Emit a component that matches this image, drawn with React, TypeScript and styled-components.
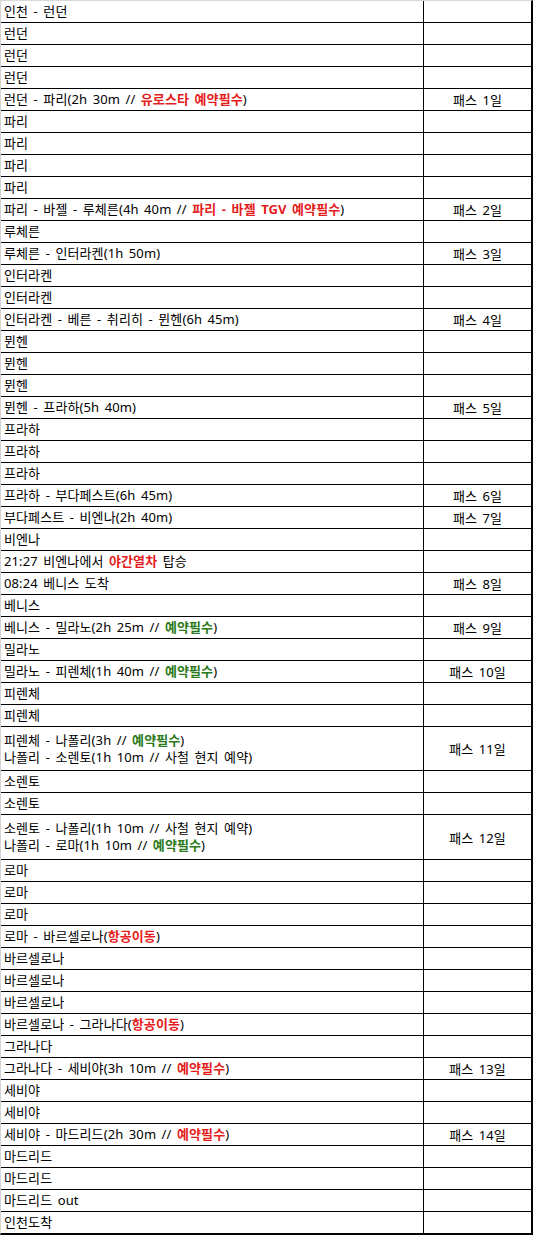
import React from 'react';
import styled, { createGlobalStyle } from 'styled-components';

const GlobalStyle = createGlobalStyle`
  html, body {
    margin: 0;
    padding: 0;
    background: #fff;
  }
  * {
    box-sizing: border-box;
  }
`;

type Tone = 'plain' | 'red' | 'green';

interface Item {
    lines: string[];
    pass?: string;
    h?: number;
}

// [r:...] = red bold, [g:...] = green bold
const items: Item[] = [
    { lines: ['인천 - 런던'] },
    { lines: ['런던'] },
    { lines: ['런던'] },
    { lines: ['런던'] },
    { lines: ['런던 - 파리(2h 30m // [r:유로스타 예약필수])'], pass: '패스 1일' },
    { lines: ['파리'] },
    { lines: ['파리'] },
    { lines: ['파리'] },
    { lines: ['파리'] },
    { lines: ['파리 - 바젤 - 루체른(4h 40m // [r:파리 - 바젤 TGV 예약필수])'], pass: '패스 2일' },
    { lines: ['루체른'] },
    { lines: ['루체른 - 인터라켄(1h 50m)'], pass: '패스 3일' },
    { lines: ['인터라켄'] },
    { lines: ['인터라켄'] },
    { lines: ['인터라켄 - 베른 - 취리히 - 뮌헨(6h 45m)'], pass: '패스 4일' },
    { lines: ['뮌헨'] },
    { lines: ['뮌헨'] },
    { lines: ['뮌헨'] },
    { lines: ['뮌헨 - 프라하(5h 40m)'], pass: '패스 5일' },
    { lines: ['프라하'] },
    { lines: ['프라하'] },
    { lines: ['프라하'] },
    { lines: ['프라하 - 부다페스트(6h 45m)'], pass: '패스 6일' },
    { lines: ['부다페스트 - 비엔나(2h 40m)'], pass: '패스 7일' },
    { lines: ['비엔나'] },
    { lines: ['21:27 비엔나에서 [r:야간열차] 탑승'] },
    { lines: ['08:24 베니스 도착'], pass: '패스 8일' },
    { lines: ['베니스'] },
    { lines: ['베니스 - 밀라노(2h 25m // [g:예약필수])'], pass: '패스 9일' },
    { lines: ['밀라노'] },
    { lines: ['밀라노 - 피렌체(1h 40m // [g:예약필수])'], pass: '패스 10일' },
    { lines: ['피렌체'] },
    { lines: ['피렌체'] },
    {
        lines: ['피렌체 - 나폴리(3h // [g:예약필수])', '나폴리 - 소렌토(1h 10m // 사철 현지 예약)'],
        pass: '패스 11일',
        h: 43,
    },
    { lines: ['소렌토'] },
    { lines: ['소렌토'] },
    {
        lines: ['소렌토 - 나폴리(1h 10m // 사철 현지 예약)', '나폴리 - 로마(1h 10m // [g:예약필수])'],
        pass: '패스 12일',
        h: 44,
    },
    { lines: ['로마'] },
    { lines: ['로마'] },
    { lines: ['로마'] },
    { lines: ['로마 - 바르셀로나([r:항공이동])'] },
    { lines: ['바르셀로나'] },
    { lines: ['바르셀로나'] },
    { lines: ['바르셀로나'] },
    { lines: ['바르셀로나 - 그라나다([r:항공이동])'] },
    { lines: ['그라나다'] },
    { lines: ['그라나다 - 세비야(3h 10m // [r:예약필수])'], pass: '패스 13일' },
    { lines: ['세비야'] },
    { lines: ['세비야'] },
    { lines: ['세비야 - 마드리드(2h 30m // [r:예약필수])'], pass: '패스 14일' },
    { lines: ['마드리드'] },
    { lines: ['마드리드'] },
    { lines: ['마드리드 out'] },
    { lines: ['인천도착'] },
];

const parse = (line: string): { text: string; tone: Tone }[] => {
    const out: { text: string; tone: Tone }[] = [];
    const re = /\[(r|g):([^\]]+)\]/g;
    let last = 0;
    let m: RegExpExecArray | null;
    while ((m = re.exec(line)) !== null) {
        if (m.index > last) out.push({ text: line.slice(last, m.index), tone: 'plain' });
        out.push({ text: m[2], tone: m[1] === 'r' ? 'red' : 'green' });
        last = m.index + m[0].length;
    }
    if (last < line.length) out.push({ text: line.slice(last), tone: 'plain' });
    return out;
};

export default function App() {
    return (
        <>
            <GlobalStyle />
            <Sheet>
                {items.map((item, i) => (
                    <Row key={i} $h={item.h ?? 21}>
                        <RouteCell>
                            {item.lines.map((line, j) => (
                                <Line key={j}>
                                    {parse(line).map((seg, k) =>
                                        seg.tone === 'plain' ? (
                                            <React.Fragment key={k}>{seg.text}</React.Fragment>
                                        ) : (
                                            <Mark key={k} $tone={seg.tone}>{seg.text}</Mark>
                                        )
                                    )}
                                </Line>
                            ))}
                        </RouteCell>
                        <PassCell>{item.pass}</PassCell>
                    </Row>
                ))}
            </Sheet>
        </>
    );
}

const Sheet = styled.div`
  width: 533px;
  display: flex;
  flex-direction: column;
  border-top: 1px solid #d9d9d9;
  border-left: 1px solid #d4d4d4;
  border-right: 2px solid #000;
  border-bottom: 2px solid #000;
  font-family: "Noto Sans", "Noto Sans CJK KR", sans-serif;
  font-size: 13px;
  letter-spacing: 0.1px;
  word-spacing: 2px;
  color: #000;
`;

const Row = styled.div<{ $h: number }>`
  display: grid;
  grid-template-columns: 423px 1fr;
  height: ${p => p.$h + 1}px;
  border-bottom: 1px solid #000;

  &:last-child {
    height: ${p => p.$h}px;
    border-bottom: none;
  }
`;

const RouteCell = styled.div`
  display: flex;
  flex-direction: column;
  justify-content: center;
  padding-left: 3px;
  border-right: 1px solid #000;
  overflow: hidden;
`;

const Line = styled.div`
  line-height: 17px;
  white-space: nowrap;
`;

const PassCell = styled.div`
  display: flex;
  align-items: center;
  justify-content: center;
  white-space: nowrap;
`;

const Mark = styled.span<{ $tone: Tone }>`
  font-weight: 700;
  color: ${p => (p.$tone === 'red' ? '#e51c1c' : '#2b7a1a')};
`;
